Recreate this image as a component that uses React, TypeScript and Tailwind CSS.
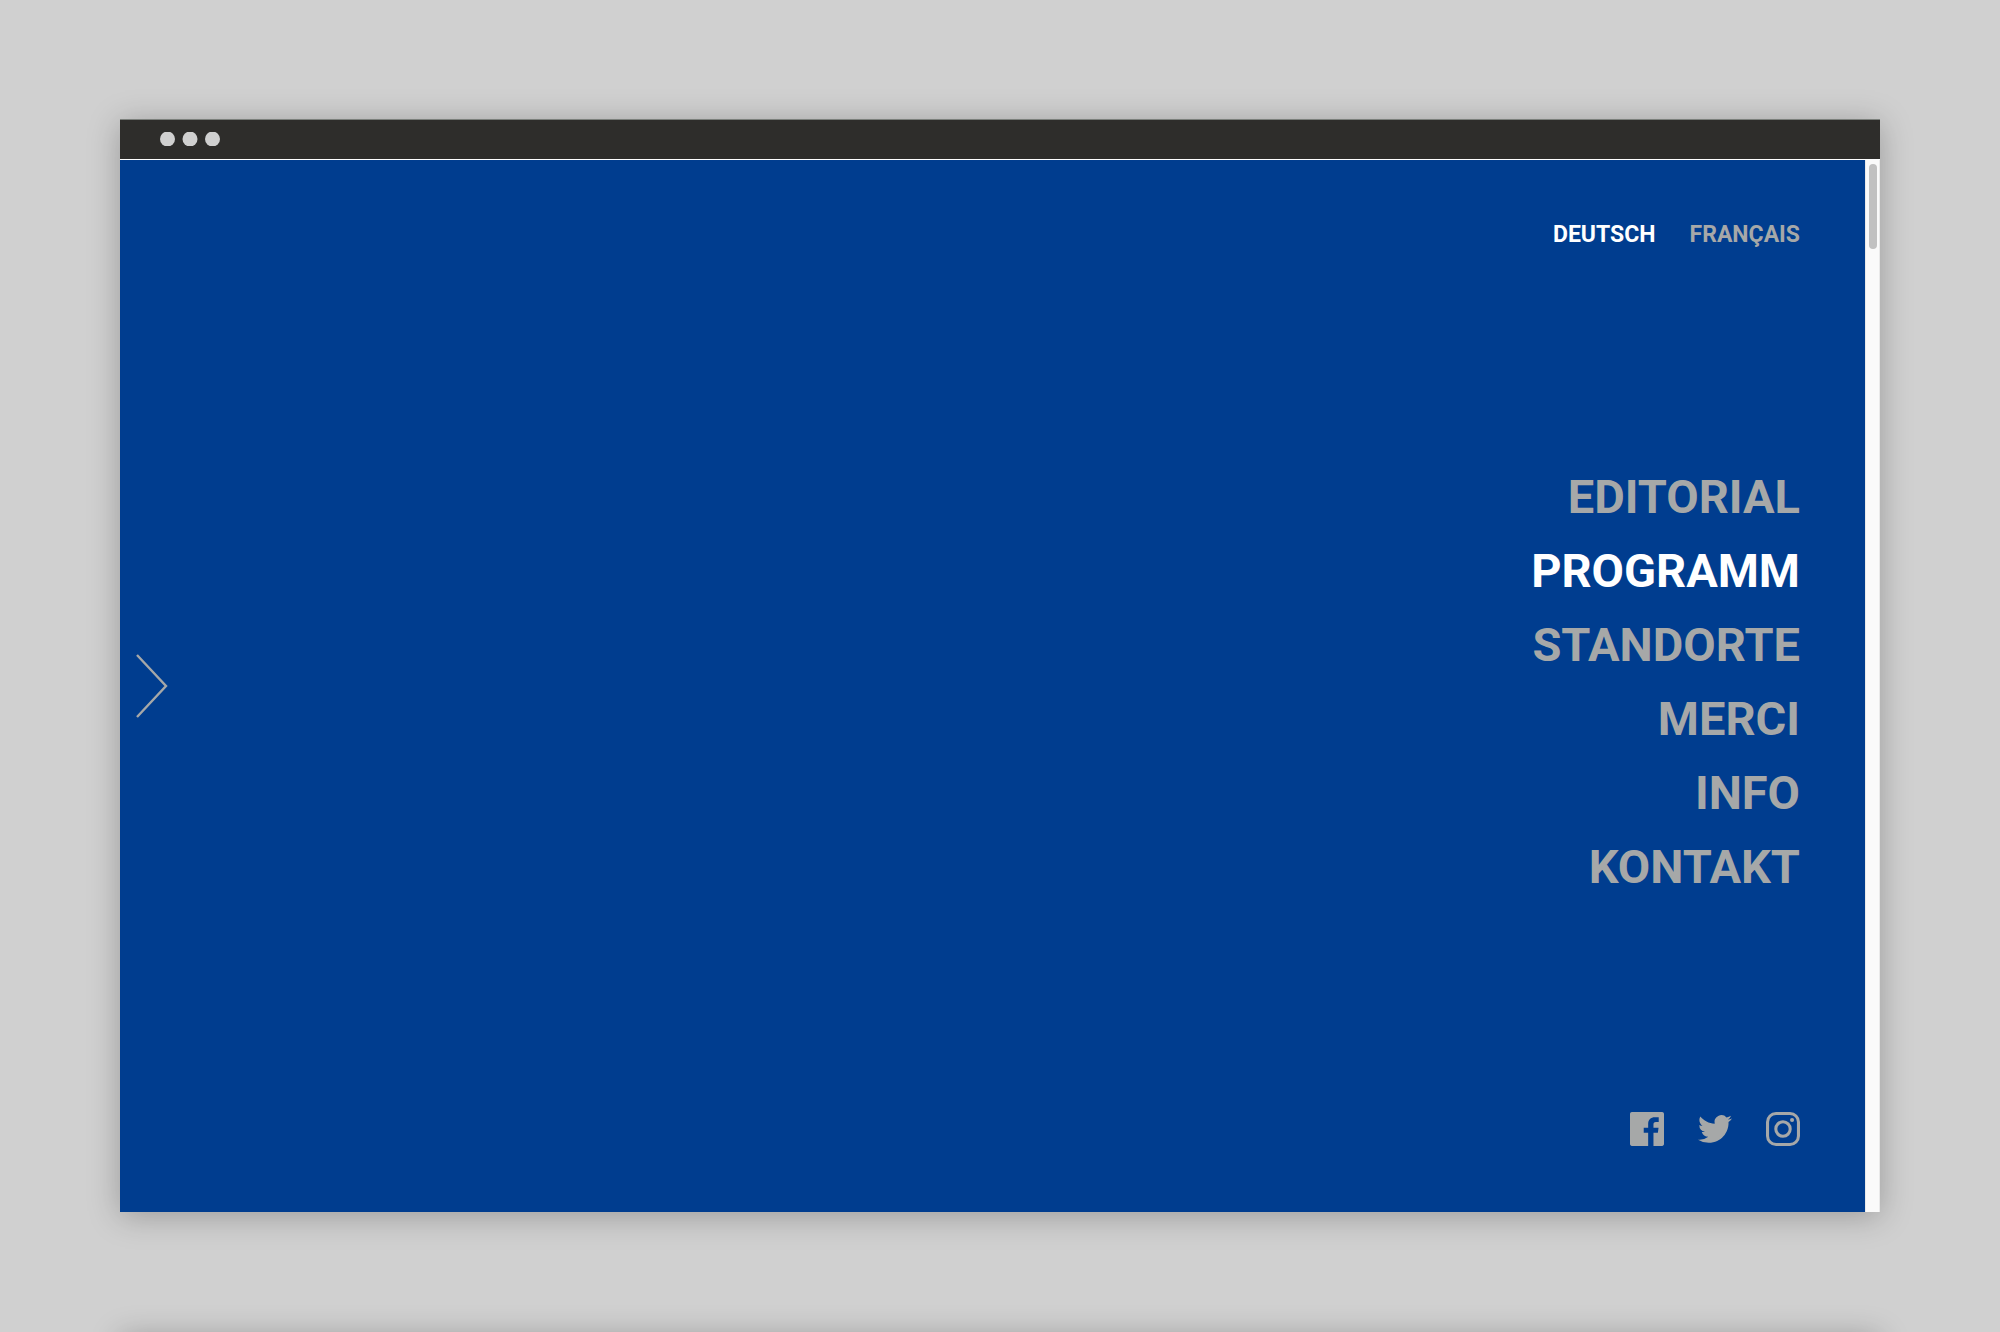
const languages = [
  { label: 'DEUTSCH', lang: 'de', active: true },
  { label: 'FRANÇAIS', lang: 'fr', active: false },
];

const pages = [
  { label: 'EDITORIAL', active: false },
  { label: 'PROGRAMM', active: true },
  { label: 'STANDORTE', active: false },
  { label: 'MERCI', active: false },
  { label: 'INFO', active: false },
  { label: 'KONTAKT', active: false },
];

function FacebookIcon() {
  return (
    <svg viewBox="0 0 24 24" className="size-[34px]" fill="currentColor" aria-hidden="true">
      <path d="M22.676 0H1.324C.593 0 0 .593 0 1.324v21.352C0 23.408.593 24 1.324 24h11.494v-9.294H9.689v-3.621h3.129V8.41c0-3.099 1.894-4.785 4.659-4.785 1.325 0 2.464.097 2.796.141v3.24h-1.921c-1.5 0-1.792.721-1.792 1.771v2.311h3.584l-.465 3.63H16.56V24h6.115c.733 0 1.325-.592 1.325-1.324V1.324C24 .593 23.408 0 22.676 0" />
    </svg>
  );
}

function TwitterIcon() {
  return (
    <svg viewBox="0 0 24 24" className="size-[34px]" fill="currentColor" aria-hidden="true">
      <path d="M23.953 4.57a10 10 0 01-2.825.775 4.958 4.958 0 002.163-2.723c-.951.555-2.005.959-3.127 1.184a4.92 4.92 0 00-8.384 4.482C7.69 8.095 4.067 6.13 1.64 3.162a4.822 4.822 0 00-.666 2.475c0 1.71.87 3.213 2.188 4.096a4.904 4.904 0 01-2.228-.616v.06a4.923 4.923 0 003.946 4.827 4.996 4.996 0 01-2.212.085 4.936 4.936 0 004.604 3.417 9.867 9.867 0 01-6.102 2.105c-.39 0-.779-.023-1.17-.067a13.995 13.995 0 007.557 2.209c9.053 0 13.998-7.496 13.998-13.985 0-.21 0-.42-.015-.63A9.935 9.935 0 0024 4.59z" />
    </svg>
  );
}

function InstagramIcon() {
  return (
    <svg viewBox="0 0 24 24" className="size-[34px]" fill="none" stroke="currentColor" strokeWidth="2.16" aria-hidden="true">
      <rect x="1.08" y="1.08" width="21.84" height="21.84" rx="6" />
      <circle cx="12" cy="12" r="5.08" />
      <circle cx="18.4" cy="5.6" r="1.44" fill="currentColor" stroke="none" />
    </svg>
  );
}

const socials = [
  { name: 'Facebook', Icon: FacebookIcon },
  { name: 'Twitter', Icon: TwitterIcon },
  { name: 'Instagram', Icon: InstagramIcon },
];

function TitleBar() {
  return (
    <div className="flex h-[41px] shrink-0 items-start border-t border-b border-t-[#7c807c] border-b-white bg-[#2e2d2b] px-10 pt-3">
      <svg viewBox="0 0 60 14" className="h-[14px] w-[60px]" fill="#d0d0d0" aria-hidden="true">
        <circle cx="7.5" cy="7" r="7.5" />
        <circle cx="30" cy="7" r="7.5" />
        <circle cx="52.5" cy="7" r="7.5" />
      </svg>
    </div>
  );
}

export default function App() {
  return (
    <div className="flex h-screen flex-col overflow-hidden bg-[#d0d0d0] px-[6%] font-['Roboto',sans-serif] font-bold text-[#a6a8a8]">
      <div className="mt-[119px] mb-[120px] flex flex-1 flex-col shadow-[0_4px_30px_rgba(0,0,0,0.26)]">
        <TitleBar />
        <div className="flex flex-1">
          <main className="flex flex-1 items-stretch justify-between bg-[#003d8f]">
            <button type="button" aria-label="Weiter" className="ml-4 self-center">
              <svg viewBox="0 0 32 64" className="h-16 w-8" fill="none" stroke="currentColor" strokeWidth="2.4" aria-hidden="true">
                <path d="M1 1 30 32 1 63" />
              </svg>
            </button>
            <div className="flex flex-col items-end justify-between pt-[58px] pr-[65px] pb-[66px]">
              <nav aria-label="Sprache" className="flex gap-[34px] text-[23px] leading-[34px]">
                {languages.map(({ label, lang, active }) => (
                  <a key={lang} href={`#${lang}`} lang={lang} className={active ? 'text-white' : ''}>
                    {label}
                  </a>
                ))}
              </nav>
              <nav aria-label="Menü" className="flex flex-col items-end text-[47px] leading-[74px]">
                {pages.map(({ label, active }) => (
                  <a key={label} href={`#${label.toLowerCase()}`} className={active ? 'text-white' : ''}>
                    {label}
                  </a>
                ))}
              </nav>
              <div className="flex gap-[34px]">
                {socials.map(({ name, Icon }) => (
                  <a key={name} href={`#${name.toLowerCase()}`} aria-label={name}>
                    <Icon />
                  </a>
                ))}
              </div>
            </div>
          </main>
          <div className="w-[15px] border-x border-[#e9e9e9] bg-[#fafafa] pt-1 pr-[2px] pl-[3px]">
            <div className="h-[85px] rounded-full bg-[#c1c1c1]" />
          </div>
        </div>
      </div>
      <div className="-mb-[41px] shrink-0 shadow-[0_4px_30px_rgba(0,0,0,0.26)]">
        <TitleBar />
      </div>
    </div>
  );
}
